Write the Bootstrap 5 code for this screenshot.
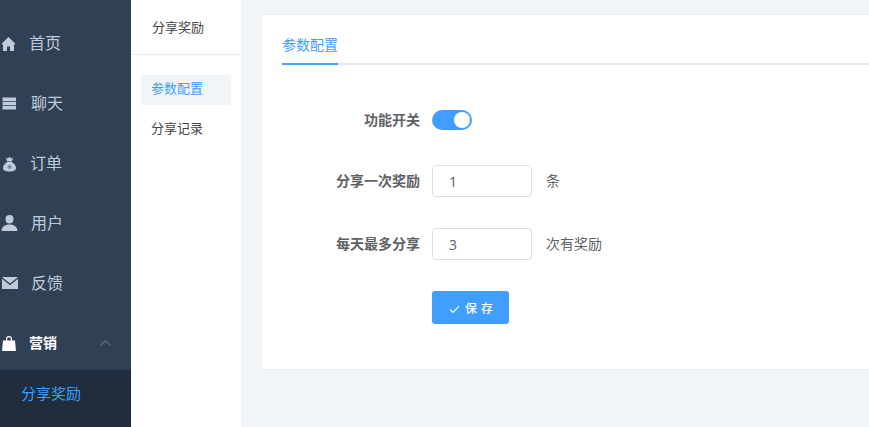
<!DOCTYPE html>
<html lang="zh-CN">
<head>
<meta charset="utf-8">
<title>分享奖励</title>
<link href="https://cdn.jsdelivr.net/npm/bootstrap@5.3.0/dist/css/bootstrap.min.css" rel="stylesheet">
<style>
html,body{height:100%;overflow:hidden}
body{font-family:"Noto Sans CJK SC","Liberation Sans",sans-serif;background:#f1f5f8;color:#606266}
.shell{height:427px;width:869px;overflow:hidden}
.side-main{width:131px;flex:none;background:#304156;padding-top:13px;overflow:hidden}
.side-row{height:60px;color:#bfcbd9;font-size:16px;padding-left:1px}
.side-row span{padding-bottom:2px}
.side-row svg{width:16px;height:16px;flex:none;margin-right:14px;fill:#bfcbd9;overflow:visible}
.side-row.first svg{margin-right:12px}
.side-row.money svg{margin-right:13px}
.side-row.open{height:54px;margin-top:3px;color:#fff;font-size:14px;font-weight:700;padding-right:20px}
.side-row.open svg.bag{fill:#fff;margin-right:12px}
.chev{width:11px!important;height:6px!important;margin:0 0 0 auto!important;fill:none!important;stroke:#5c6a7c;stroke-width:1.2}
.side-sub{background:#1f2d3d;color:#409eff;font-size:15px;height:57px;padding:13px 0 0 21px;line-height:20px}
.side-second{width:110px;flex:none;background:#fff}
.second-head{height:55px;border-bottom:1px solid #e9ecef;color:#444;font-size:13px;padding-left:21px}
.second-link{display:block;height:30px;line-height:26px;margin:0 10px 9px;padding-left:10px;font-size:13px;color:#444;text-decoration:none}
.second-link.on{background:#f1f5f8;color:#409eff;margin-bottom:10px}
.second-list{padding-top:20px}
.main-area{flex:1;padding:14px 0 0 20px;min-width:0}
.panel{height:356px;width:640px;background:#fff;border:1px solid #ebeef5;border-right:0;padding:20px 20px 0 20px;box-sizing:border-box}
.tab-line{height:30px;border-bottom:2px solid #e4e7ed}
.tab-on{display:block;height:30px;width:56px;border-bottom:2px solid #409eff;color:#409eff;font-size:14px;line-height:18px}
.form-wrap{padding-top:45px}
.f-row{height:32px;margin-bottom:31px;font-size:14px}
.f-label{width:150px;flex:none;padding-right:12px;padding-bottom:2px;text-align:right;font-weight:700;color:#606266;white-space:nowrap}
.f-input{width:100px;height:32px;border:1px solid #dcdfe6;border-radius:4px;padding:0 16px;color:#606266;font-size:14px;font-family:"Open Sans","Liberation Sans",sans-serif;background:#fff;outline:none}
.f-unit{margin-left:14px;padding-bottom:2px}
.switcher{display:block;width:40px;height:20px;border-radius:10px;background:#409eff;position:relative}
.switcher::after{content:"";position:absolute;top:2px;right:2px;width:16px;height:16px;border-radius:50%;background:#fff}
.row-switch{height:20px;margin-bottom:35px}
.btn-save{width:77px;height:33px;background:#409eff;border:0;border-radius:3px;color:#fff;font-size:12px;font-weight:500;letter-spacing:4px;padding:0 0 0 5px;margin-left:150px}
.btn-save:hover,.btn-save:active{background:#409eff!important;color:#fff!important}
.btn-save svg{width:11px;height:9px;margin-right:5px;fill:none;stroke:#fff;stroke-width:1.2}
</style>
</head>
<body>
<div class="shell d-flex">
  <aside class="side-main d-flex flex-column">
    <div class="side-row first d-flex align-items-center">
      <svg viewBox="0 0 16 16"><path d="M7.500 2 .6 8.800 2 10 2 16H6V11.500H9V16H13V10L14.400 8.800z"/></svg><span>首页</span>
    </div>
    <div class="side-row d-flex align-items-center">
      <svg viewBox="0 0 16 16"><path d="M1.500 2.500h13.500v3.400H1.500zM1.500 6.800h13.500v3.400H1.500zM1.500 11.100h13.500v3.400H1.500z"/></svg><span>聊天</span>
    </div>
    <div class="side-row money d-flex align-items-center">
      <svg viewBox="0 0 16 16"><path d="M4.800 2.600 6.800 3.400 8.500 1.800 10.200 3.400 12.200 2.600 10.800 6.400H6.200zM6.200 7h4.600C13 8.300 15 10.500 15 13c0 2.500-2.300 3.500-6.500 3.500S2 15.500 2 13C2 10.500 4 8.300 6.200 7z"/><circle cx="8.500" cy="12" r="2" fill="#7d8b9d"/></svg><span>订单</span>
    </div>
    <div class="side-row d-flex align-items-center">
      <svg viewBox="0 0 16 16"><ellipse cx="8.500" cy="4.200" rx="4" ry="4.200"/><path d="M.6 16c0-4 3-6.500 7.900-6.500s7.900 2.500 7.900 6.500z"/></svg><span>用户</span>
    </div>
    <div class="side-row d-flex align-items-center">
      <svg viewBox="0 0 16 16"><path d="M1 2h16L9 8.400zM1 3.800V14h16V3.800L9 10.300z"/></svg><span>反馈</span>
    </div>
    <div class="side-row open d-flex align-items-center">
      <svg class="bag" viewBox="0 0 16 16"><path d="M2 5.500h12l1 10.500H1zM5 5.500V4a3 3 0 0 1 6 0v1.500H9.800V4a1.800 1.800 0 0 0-3.600 0v1.500z"/></svg><span>营销</span>
      <svg class="chev" viewBox="0 0 11 6"><path d="M.5 5.500 5.500.7l5 4.800"/></svg>
    </div>
    <div class="side-sub">分享奖励</div>
  </aside>
  <nav class="side-second">
    <div class="second-head d-flex align-items-center">分享奖励</div>
    <div class="second-list">
      <a class="second-link on" href="#">参数配置</a>
      <a class="second-link" href="#">分享记录</a>
    </div>
  </nav>
  <main class="main-area">
    <div class="panel">
      <div class="tab-line"><span class="tab-on">参数配置</span></div>
      <div class="form-wrap">
        <div class="f-row row-switch d-flex align-items-center">
          <div class="f-label">功能开关</div>
          <span class="switcher"></span>
        </div>
        <div class="f-row d-flex align-items-center">
          <div class="f-label">分享一次奖励</div>
          <input class="f-input" value="1">
          <span class="f-unit">条</span>
        </div>
        <div class="f-row d-flex align-items-center">
          <div class="f-label">每天最多分享</div>
          <input class="f-input" value="3">
          <span class="f-unit">次有奖励</span>
        </div>
        <button class="btn btn-save" type="button"><svg viewBox="0 0 11 9"><path d="M1 4.500 4 7.500 10 1.200"/></svg>保存</button>
      </div>
    </div>
  </main>
</div>
<script src="https://cdn.jsdelivr.net/npm/bootstrap@5.3.0/dist/js/bootstrap.bundle.min.js"></script>
</body>
</html>
